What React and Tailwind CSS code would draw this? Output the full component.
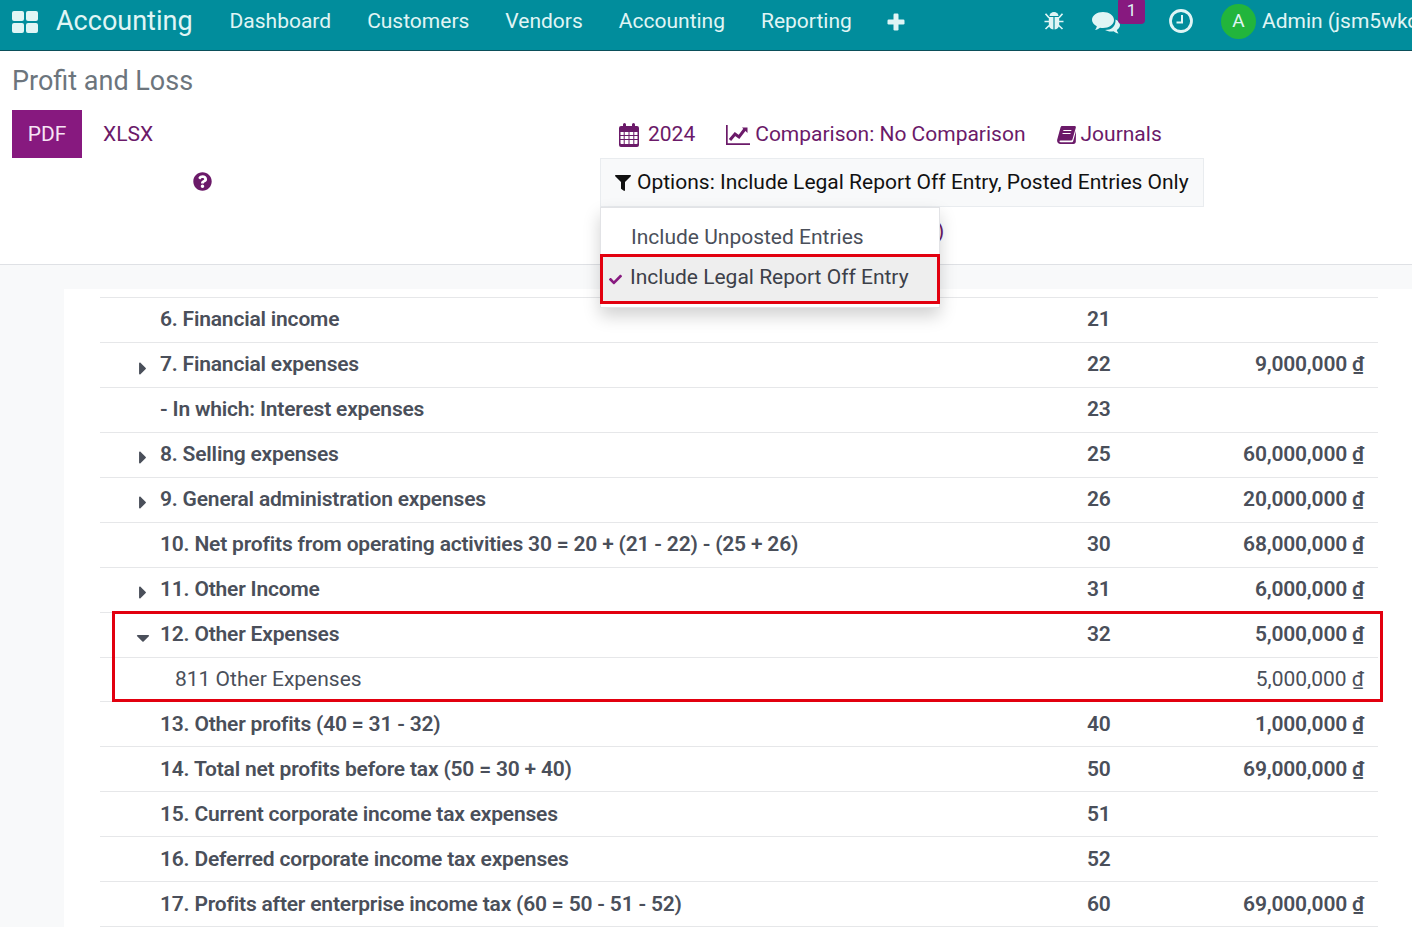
import React from 'react'
import { FaQuestionCircle, FaCaretRight, FaCaretDown, FaCheck, FaFilter } from 'react-icons/fa'

const menus = ['Dashboard', 'Customers', 'Vendors', 'Accounting', 'Reporting']

const rowsTop = [
  { name: '6. Financial income', code: '21' },
  { name: '7. Financial expenses', code: '22', amount: '9,000,000', caret: 'right' },
  { name: '- In which: Interest expenses', code: '23' },
  { name: '8. Selling expenses', code: '25', amount: '60,000,000', caret: 'right' },
  { name: '9. General administration expenses', code: '26', amount: '20,000,000', caret: 'right' },
  { name: '10. Net profits from operating activities 30 = 20 + (21 - 22) - (25 + 26)', code: '30', amount: '68,000,000' },
  { name: '11. Other Income', code: '31', amount: '6,000,000', caret: 'right' },
]

const rowsBottom = [
  { name: '13. Other profits (40 = 31 - 32)', code: '40', amount: '1,000,000' },
  { name: '14. Total net profits before tax (50 = 30 + 40)', code: '50', amount: '69,000,000' },
  { name: '15. Current corporate income tax expenses', code: '51' },
  { name: '16. Deferred corporate income tax expenses', code: '52' },
  { name: '17. Profits after enterprise income tax (60 = 50 - 51 - 52)', code: '60', amount: '69,000,000' },
]

function Row({ row, child }) {
  return (
    <div className={'flex items-center h-[44.95px] pt-[0.4px] border-t border-[#e6e7e9] ' + (child ? 'font-normal' : 'font-semibold tracking-[-0.19px]')}>
      <div className="w-[60px] pl-[35px]">
        <div className="w-[16px] flex justify-center pt-[6px] text-[21px]">
          {row.caret === 'right' && <FaCaretRight />}
          {row.caret === 'down' && <FaCaretDown />}
        </div>
      </div>
      <div className={'flex-1 ' + (child ? 'pl-[15px]' : '')}>{row.name}</div>
      <div className="w-[120px]">{row.code}</div>
      <div className="w-[171px] text-right pr-[14px]">{row.amount ? row.amount + ' ₫' : ''}</div>
    </div>
  )
}

export default function App() {
  return (
    <div className="h-[927px] overflow-hidden bg-white font-['Roboto',sans-serif] text-[21px] text-[#4a4f5a]">
      <nav className="h-[51px] bg-[#018d9c] border-b border-[#0b4f5a] flex items-center pb-[7px] text-[#e0f5f5] whitespace-nowrap overflow-hidden">
        <svg width="26" height="22" viewBox="0 0 26 22" className="ml-[12px] mr-[18px]" fill="#e0f5f5">
          <rect x="0" y="0" width="12" height="10" rx="2" />
          <rect x="14" y="0" width="12" height="10" rx="2" />
          <rect x="0" y="12" width="12" height="10" rx="2" />
          <rect x="14" y="12" width="12" height="10" rx="2" />
        </svg>
        <span className="text-[27px] mr-[19px]">Accounting</span>
        {menus.map((m) => (
          <span key={m} className="px-[18px]">{m}</span>
        ))}
        <svg width="18" height="18" viewBox="0 0 18 18" className="ml-[17px]" fill="currentColor">
          <rect x="6.500" y="0.500" width="5" height="17" rx="1.200" />
          <rect x="0.500" y="6.500" width="17" height="5" rx="1.200" />
        </svg>
        <div className="ml-auto flex items-center">
          <svg width="20" height="20" viewBox="0 0 20 20" className="mr-[28px] mb-[1px]" fill="currentColor" stroke="none">
            <path d="M5.500 5a4.500 4 0 0 1 9 0z" />
            <path d="M4.800 6h4.600v12.500c-2.800-.3-4.600-2.300-4.600-5zM10.600 6h4.600v7.500c0 2.700-1.800 4.700-4.600 5z" />
            <path d="M1.500 2.800l3.500 4M18.500 2.800l-3.500 4M.5 10.500h4.500M19.500 10.500H15M1.500 18l3.700-3.500M18.500 18l-3.700-3.500" stroke="currentColor" strokeWidth="1.700" fill="none" />
          </svg>
          <div className="relative mr-[49px]">
            <svg width="28" height="24" viewBox="0 0 28 24" fill="currentColor" className="mt-[2px]">
              <path d="M11 1c6 0 11 3.500 11 8s-5 8-11 8c-1 0-2-.1-3-.3-1.500 1.200-3.200 2-5 2.300.9-1.200 1.600-2.400 1.800-3.800C2 13.700 0 11.500 0 9c0-4.500 5-8 11-8z" />
              <path d="M23.500 8.500c2.700 1.200 4.500 3.200 4.500 5.500 0 2-1.300 3.700-3.200 5 .2 1.300.9 2.500 1.700 3.500-1.800-.3-3.500-1.100-5-2.300-.8.200-1.700.3-2.500.3-2.300 0-4.400-.6-6-1.500 6 0 11-3 10.500-10.500z" />
            </svg>
            <span className="absolute left-[26px] top-[-11px] w-[27px] h-[26px] rounded-[4px] bg-[#87197f] text-[17px] flex items-center justify-center">1</span>
          </div>
          <svg width="24" height="24" viewBox="0 0 24 24" className="mr-[28px] mb-[1px]" fill="none" stroke="currentColor">
            <circle cx="12" cy="12" r="10.500" strokeWidth="2.800" />
            <path d="M13 6v7.500H7.500" strokeWidth="2" />
          </svg>
          <span className="w-[35px] h-[35px] rounded-full bg-[#22b53c] flex items-center justify-center text-[19px] mr-[6px]">A</span>
          <span className="w-[150px] overflow-hidden">Admin (jsm5wkc</span>
        </div>
      </nav>

      <header className="h-[214px] border-b border-[#dfe1e5] relative">
        <h1 className="text-[27px] leading-[32px] text-[#6c757d] pl-[12px] pt-[14px]">Profit and Loss</h1>
        <div className="flex mt-[13px]">
          <div className="w-[600px] pl-[12px]">
            <div className="flex items-center h-[48px]">
              <span className="w-[70px] h-[48px] pt-[1px] bg-[#87197f] text-[#f6e4f5] flex items-center justify-center">PDF</span>
              <span className="ml-[21px] pt-[1px] text-[#6b1a69]">XLSX</span>
            </div>
            <FaQuestionCircle className="ml-[181px] mt-[14px] text-[19px] text-[#6b1a69]" />
          </div>
          <div>
            <div className="flex items-center h-[48px] pl-[19px] pt-[1px] text-[#6b1a69] whitespace-nowrap">
              <svg width="20" height="24" viewBox="0 0 20 24" className="mr-[9px]" fill="currentColor">
                <path fillRule="evenodd" d="M2 3h2V1.500a1.500 1.500 0 0 1 3 0V3h6V1.500a1.500 1.500 0 0 1 3 0V3h2a2 2 0 0 1 2 2v17a2 2 0 0 1-2 2H2a2 2 0 0 1-2-2V5a2 2 0 0 1 2-2zM1.500 9v3h3.200V9zM5.700 9v3H9.500V9zM10.500 9v3h3.800V9zM15.300 9v3h3.200V9zM1.500 13v3h3.200v-3zM5.700 13v3H9.500v-3zM10.500 13v3h3.800v-3zM15.300 13v3h3.200v-3zM1.500 17v3.200c0 .4.300.8.800.8h2.400v-4zM5.700 17v4H9.500v-4zM10.500 17v4h3.800v-4zM15.300 17v4h2.400c.5 0 .8-.4.8-.8V17z" />
              </svg>
              <span className="mr-[31px]">2024</span>
              <svg width="24" height="20" viewBox="0 0 24 20" className="mr-[5px]" fill="none" stroke="currentColor">
                <path d="M.8 0v19.200H24" strokeWidth="1.800" />
                <path d="M4 15l5-6 4 3 6-8" strokeWidth="3" />
                <path d="M16 2.500h5.500V8z" fill="currentColor" stroke="none" />
              </svg>
              <span className="mr-[31px]">Comparison: No Comparison</span>
              <svg width="19" height="18" viewBox="0 0 19 18" className="mr-[5px]" fill="currentColor">
                <path fillRule="evenodd" d="M5 0h12.500c1 0 1.600.8 1.300 1.800L15.600 13c-.3 1-1 1.600-2 1.600H3.500c-.8 0-1.200.5-1 1 .1.400.6.700 1.200.700H15c.5 0 .8-.3 1-.8l3-10.500-.2 11c-.3 1-1.100 2-2.300 2H3.500C1.500 18 0 16.500.1 14.500c0-.5.1-.8.200-1.200L3.500 1.500C3.700.6 4.300 0 5 0zM6.500 4l-.3 1h8l.3-1zM5.700 7l-.3 1h8l.3-1z" />
              </svg>
              <span>Journals</span>
            </div>
            <div className="w-[604px] h-[49px] bg-[#f8f9fa] border border-[#e9ecef] flex items-center pl-[14px] text-[#111] whitespace-nowrap">
              <FaFilter className="text-[16px] mr-[6px]" />
              <span>Options: Include Legal Report Off Entry, Posted Entries Only</span>
            </div>
            <div className="pl-[337px] pt-[8px] text-[#6b1a69] leading-[32px]">)</div>
          </div>
        </div>
        <div className="absolute z-10 left-[600px] top-[156px] w-[340px] h-[101px] bg-white border border-[#e2e3e6] shadow-[0_8px_16px_rgba(0,0,0,0.18)]">
          <div className="h-[46px] pl-[30px] pt-[16px] leading-[26px]">Include Unposted Entries</div>
          <div className="h-[50px] bg-[#eeeeee] border-[3px] border-[#e2000f] -mx-px flex items-center pb-[3px] text-[#3c4049]">
            <FaCheck className="text-[13px] text-[#87197f] ml-[6px] mr-[8px] mt-[3px]" />
            <span>Include Legal Report Off Entry</span>
          </div>
        </div>
      </header>

      <main className="bg-[#f8f9fa] pl-[64px] pt-[24px] h-full">
        <div className="bg-white pl-[36px] pr-[34px] pt-[8px] h-full">
          {rowsTop.map((r) => <Row key={r.name} row={r} />)}
          <div className="relative">
            <Row row={{ name: '12. Other Expenses', code: '32', amount: '5,000,000', caret: 'down' }} />
            <Row child row={{ name: '811 Other Expenses', amount: '5,000,000' }} />
            <div className="absolute left-[12px] right-[-5px] top-[-1px] bottom-[-1px] border-[3px] border-[#e2000f]"></div>
          </div>
          {rowsBottom.map((r) => <Row key={r.name} row={r} />)}
          <div className="border-t border-[#e6e7e9]"></div>
        </div>
      </main>
    </div>
  )
}
